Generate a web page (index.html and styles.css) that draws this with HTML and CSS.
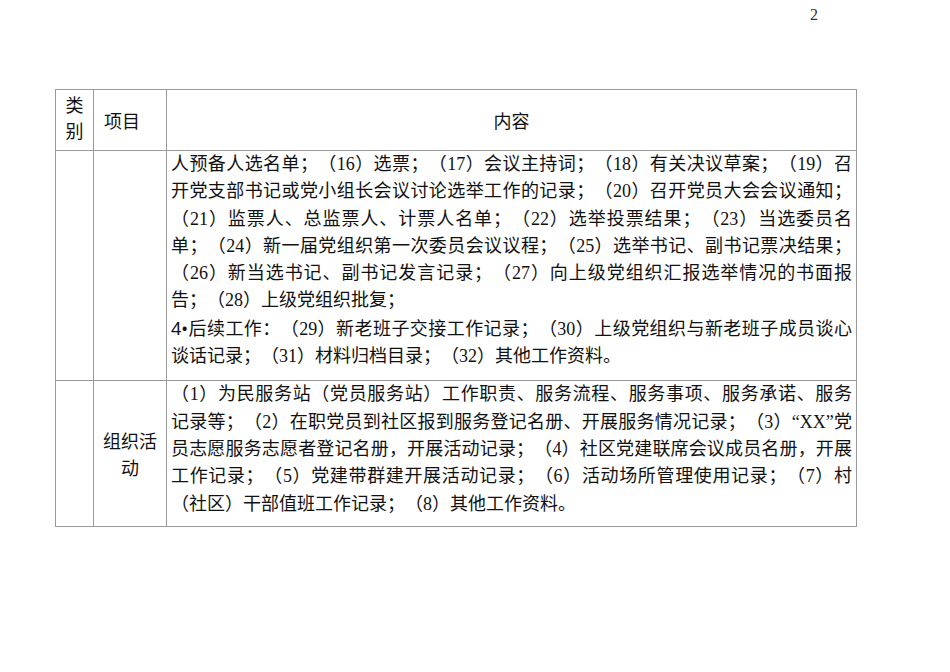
FILE: index.html
```html
<!DOCTYPE html>
<html lang="zh-CN">
<head>
<meta charset="utf-8">
<title>2</title>
<link rel="stylesheet" href="styles.css">
</head>
<body>
<div class="page">
  <div class="pageno">2</div>
  <table class="grid">
    <colgroup>
      <col class="c1">
      <col class="c2">
      <col class="c3">
    </colgroup>
    <tr class="head">
      <th class="cat"><div class="cat-txt">类<br>别</div></th>
      <th class="item">项目</th>
      <th class="content-h">内容</th>
    </tr>
    <tr class="r1">
      <td></td>
      <td></td>
      <td class="txt">
        <span class="ln">人预备人选名单；（16）选票；（17）会议主持词；（18）有关决议草案；（19）召</span>
        <span class="ln">开党支部书记或党小组长会议讨论选举工作的记录；（20）召开党员大会会议通知；</span>
        <span class="ln">（21）监票人、总监票人、计票人名单；（22）选举投票结果；（23）当选委员名</span>
        <span class="ln">单；（24）新一届党组织第一次委员会议议程；（25）选举书记、副书记票决结果；</span>
        <span class="ln">（26）新当选书记、副书记发言记录；（27）向上级党组织汇报选举情况的书面报</span>
        <span class="ln end">告；（28）上级党组织批复；</span>
        <span class="ln"><span class="sans">4•</span>后续工作：（29）新老班子交接工作记录；（30）上级党组织与新老班子成员谈心</span>
        <span class="ln end">谈话记录；（31）材料归档目录；（32）其他工作资料。</span>
      </td>
    </tr>
    <tr class="r2">
      <td></td>
      <td class="item2">组织活<br>动</td>
      <td class="txt">
        <span class="ln">（1）为民服务站（党员服务站）工作职责、服务流程、服务事项、服务承诺、服务</span>
        <span class="ln">记录等；（2）在职党员到社区报到服务登记名册、开展服务情况记录；（3）“XX”党</span>
        <span class="ln">员志愿服务志愿者登记名册，开展活动记录；（4）社区党建联席会议成员名册，开展</span>
        <span class="ln">工作记录；（5）党建带群建开展活动记录；（6）活动场所管理使用记录；（7）村</span>
        <span class="ln end">（社区）干部值班工作记录；（8）其他工作资料。</span>
      </td>
    </tr>
  </table>
</div>
</body>
</html>
```
FILE: styles.css
```css
html, body {
  margin: 0;
  padding: 0;
  background: #ffffff;
}

.page {
  padding: 4px 0 0 55px;
  font-family: "Noto Sans CJK SC", "Noto Sans", sans-serif;
  color: #111;
  text-spacing-trim: space-all;
}

.pageno {
  width: 763px;
  text-align: right;
  font-family: "Liberation Serif", serif;
  font-size: 16px;
  line-height: 22px;
  color: #333;
  margin-bottom: 63px;
}

.grid {
  border-collapse: collapse;
  table-layout: fixed;
  width: 801px;
  font-size: 18px;
}

.c1 { width: 38px; }
.c2 { width: 73px; }
.c3 { width: 690px; }

.grid th,
.grid td {
  border: 1px solid #999;
  padding: 0;
  font-weight: normal;
}

.grid .head th {
  height: 60px;
  line-height: 26px;
  vertical-align: middle;
}

.grid .cat {
  text-align: center;
}

.cat-txt {
  margin-bottom: 6px;
}

.grid .item {
  text-align: left;
  padding-left: 10px;
}

.grid .content-h {
  text-align: center;
}

.grid .txt {
  vertical-align: top;
  padding: 0 4px 0 4px;
  font-family: "Liberation Serif", "Noto Sans CJK SC", serif;
  line-height: 27.3px;
  color: #111;
  text-spacing-trim: space-all;
}

.grid .r1 .txt {
  padding-bottom: 10px;
}

.grid .r2 .txt {
  padding-bottom: 8px;
}

.ln {
  display: block;
  text-align: justify;
  text-align-last: justify;
  white-space: nowrap;
}

.ln.end {
  text-align-last: left;
}

.sans {
  font-family: "Noto Sans", "Noto Sans CJK SC", sans-serif;
}

.grid .item2 {
  text-align: center;
  vertical-align: middle;
  line-height: 27px;
}
```
